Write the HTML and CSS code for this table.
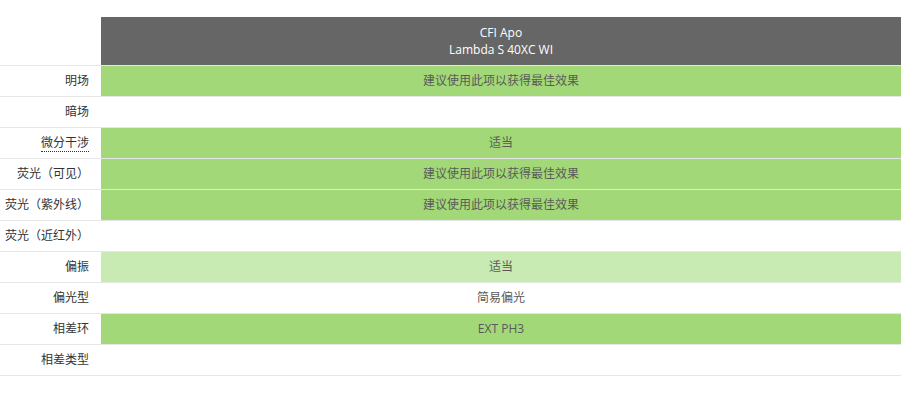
FILE: index.html
```html
<!DOCTYPE html>
<html lang="zh">
<head>
<meta charset="utf-8">
<link rel="stylesheet" href="styles.css">
</head>
<body>
<table class="spec">
  <thead>
    <tr>
      <th class="corner"></th>
      <th class="model">CFI Apo<br>Lambda S 40XC WI</th>
    </tr>
  </thead>
  <tbody>
    <tr><th>明场</th><td class="rec">建议使用此项以获得最佳效果</td></tr>
    <tr><th>暗场</th><td></td></tr>
    <tr><th><abbr class="term">微分干涉</abbr></th><td class="rec">适当</td></tr>
    <tr><th>荧光（可见）</th><td class="rec">建议使用此项以获得最佳效果</td></tr>
    <tr><th>荧光（紫外线）</th><td class="rec">建议使用此项以获得最佳效果</td></tr>
    <tr><th>荧光（近红外）</th><td></td></tr>
    <tr><th>偏振</th><td class="ok">适当</td></tr>
    <tr><th>偏光型</th><td>简易偏光</td></tr>
    <tr><th>相差环</th><td class="rec">EXT PH3</td></tr>
    <tr><th>相差类型</th><td></td></tr>
  </tbody>
</table>
</body>
</html>
```

FILE: styles.css
```css
html, body {
  margin: 0;
  padding: 0;
  background: #fff;
}
body {
  font-family: "Open Sans", "Noto Sans CJK SC", sans-serif;
  font-size: 12px;
  color: #333;
  padding-top: 17px;
}
.spec {
  width: 901px;
  border-collapse: collapse;
  border-spacing: 0;
  table-layout: fixed;
}
.spec th, .spec td {
  padding: 0;
  font-weight: normal;
}
.spec thead th.corner {
  width: 101px;
}
.spec thead th.model {
  background: #666666;
  color: #fff;
  text-align: center;
  height: 48px;
  line-height: 17px;
  box-sizing: border-box;
}
.spec tbody th, .spec tbody td {
  border-top: 1px solid #e6e6e6;
  border-bottom: 1px solid #e6e6e6;
  height: 30px;
  line-height: 16px;
}
.spec tbody th {
  text-align: right;
  padding-right: 12px;
  color: #333;
  white-space: nowrap;
}
.spec tbody td {
  text-align: center;
  color: #5a5a5a;
}
.spec tbody td.rec {
  background: #a2d877;
}
.spec tbody td.ok {
  background: #c8eab3;
}
.term {
  text-decoration: none;
  border-bottom: 1px dotted #333;
}
```
